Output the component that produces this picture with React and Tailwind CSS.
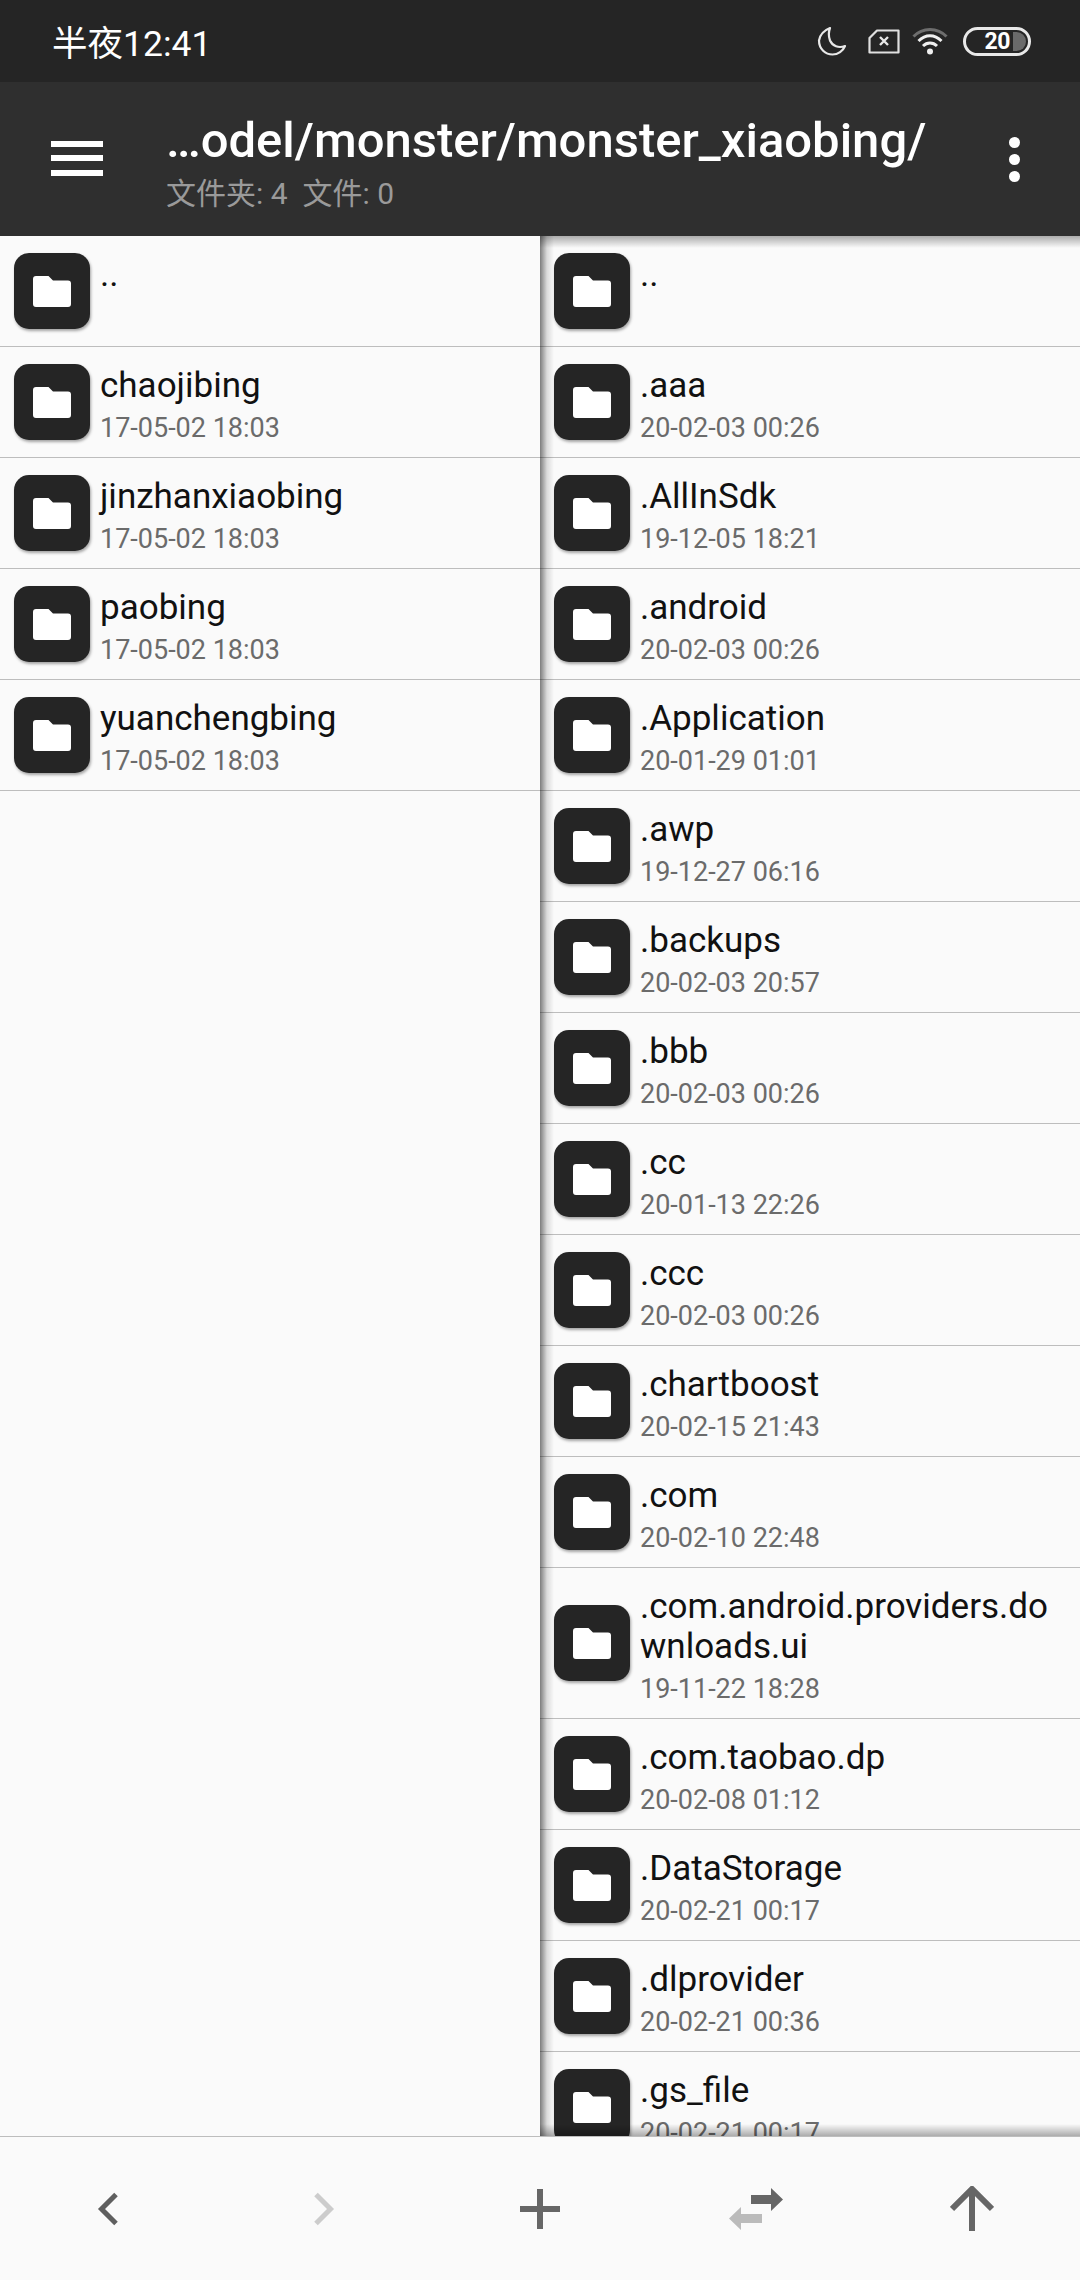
const leftRows = [
    { name: '..', date: '' },
    { name: 'chaojibing', date: '17-05-02 18:03' },
    { name: 'jinzhanxiaobing', date: '17-05-02 18:03' },
    { name: 'paobing', date: '17-05-02 18:03' },
    { name: 'yuanchengbing', date: '17-05-02 18:03' },
];

const rightRows = [
    { name: '..', date: '' },
    { name: '.aaa', date: '20-02-03 00:26' },
    { name: '.AllInSdk', date: '19-12-05 18:21' },
    { name: '.android', date: '20-02-03 00:26' },
    { name: '.Application', date: '20-01-29 01:01' },
    { name: '.awp', date: '19-12-27 06:16' },
    { name: '.backups', date: '20-02-03 20:57' },
    { name: '.bbb', date: '20-02-03 00:26' },
    { name: '.cc', date: '20-01-13 22:26' },
    { name: '.ccc', date: '20-02-03 00:26' },
    { name: '.chartboost', date: '20-02-15 21:43' },
    { name: '.com', date: '20-02-10 22:48' },
    { name: '.com.android.providers.downloads.ui', date: '19-11-22 18:28' },
    { name: '.com.taobao.dp', date: '20-02-08 01:12' },
    { name: '.DataStorage', date: '20-02-21 00:17' },
    { name: '.dlprovider', date: '20-02-21 00:36' },
    { name: '.gs_file', date: '20-02-21 00:17' },
];

function FolderIcon() {
    return (
        <div className="w-[76px] h-[76px] shrink-0 rounded-[15px] bg-[#252525] flex items-center justify-center shadow-[1px_2px_3px_rgba(0,0,0,0.35)]">
            <svg width="38" height="31" viewBox="0 0 38 31">
                <path d="M3 0H15.5L20 4.5H35A3 3 0 0 1 38 7.500V28A3 3 0 0 1 35 31H3A3 3 0 0 1 0 28V3A3 3 0 0 1 3 0Z" fill="#fff" />
            </svg>
        </div>
    );
}

function Row({ name, date }) {
    return (
        <div className="flex items-center gap-[10px] pl-[14px] pr-[20px] py-[17px] border-b border-[#bdbdbd]">
            <FolderIcon />
            <div className="flex-1 min-w-0">
                <div className="pt-[2px] text-[35px] leading-[40px] text-[#111] break-all">{name}</div>
                <div className="text-[27px] leading-[44px] h-[34px] text-[#6b6b6b]">{date}</div>
            </div>
        </div>
    );
}

function StatusIcons() {
    return (
        <div className="flex items-center">
            <svg width="30" height="30" viewBox="0 0 30 30" fill="none" className="mr-[21px]">
                <path d="M13 2C8 4 3 8.500 2 14.500C2 23 8.500 28.500 15.500 28.500C21 28.500 26 25 28 20C21.500 22.500 15.500 20 13 14.500C11.500 10.500 11.500 6 13 2Z" stroke="#e8e8e8" strokeWidth="2.200" strokeLinejoin="round" />
            </svg>
            <svg width="32" height="25" viewBox="0 0 32 25" fill="none" className="mr-[12px]">
                <path d="M9 1.500H30.500V23.500H1.500V9Z" stroke="#e0e0e0" strokeWidth="2.200" strokeLinejoin="round" />
                <path d="M12 8L20 16M20 8L12 16" stroke="#e8e8e8" strokeWidth="2.400" />
            </svg>
            <svg width="36" height="28" viewBox="0 0 36 28" fill="none" className="mr-[15px]">
                <path d="M1.500 9.500C10.500 0 25.500 0 34.500 9.500" stroke="#6e6e6e" strokeWidth="3" />
                <path d="M6.500 14C13.500 7 22.500 7 29.500 14" stroke="#f0f0f0" strokeWidth="3" />
                <path d="M11 19C15 15 21 15 25 19" stroke="#f0f0f0" strokeWidth="3" />
                <circle cx="18" cy="24.500" r="3" fill="#f0f0f0" />
            </svg>
            <div className="relative w-[68px] h-[29px] rounded-full border-[3px] border-[#e8e8e8] flex items-center justify-end pr-[18px]">
                <span className="text-[23px] leading-none font-bold text-white tracking-[-0.5px]">20</span>
                <div className="absolute right-[2px] top-[2px] w-[13px] h-[19px] rounded-r-full bg-[#6a6a6a]" />
            </div>
        </div>
    );
}

export default function App() {
    return (
        <div
            className="w-[1080px] h-[2280px] flex flex-col overflow-hidden bg-[#fafafa]"
            style={{ fontFamily: 'Roboto, "Noto Sans CJK SC", sans-serif' }}
        >
            {/* Status bar */}
            <div className="h-[82px] shrink-0 bg-[#252525] flex items-center justify-between pl-[52px] pr-[49px]">
                <span className="text-[35.500px] text-white leading-none mt-[8px]">半夜12:41</span>
                <StatusIcons />
            </div>

            {/* Toolbar */}
            <div className="h-[154px] shrink-0 bg-[#2f2f2f] flex items-center pl-[51px] pr-[60px]">
                <div className="w-[52px] h-[35px] -mt-[2px] flex flex-col justify-between shrink-0">
                    <div className="h-[6px] bg-white" />
                    <div className="h-[6px] bg-white" />
                    <div className="h-[6px] bg-white" />
                </div>
                <div className="flex-1 self-start ml-[63px] pt-[31px]">
                    <div className="text-[49px] leading-[56px] font-medium text-white whitespace-nowrap">…odel/monster/monster_xiaobing/</div>
                    <div className="text-[30px] leading-[36px] mt-[7px] text-[#9a9a9a] whitespace-pre">文件夹: 4  文件: 0</div>
                </div>
                <div className="flex flex-col gap-[6px] shrink-0">
                    <div className="w-[11px] h-[11px] rounded-full bg-white" />
                    <div className="w-[11px] h-[11px] rounded-full bg-white" />
                    <div className="w-[11px] h-[11px] rounded-full bg-white" />
                </div>
            </div>

            {/* Panes */}
            <div className="flex-1 min-h-0 flex">
                <div className="w-[540px] overflow-hidden">
                    {leftRows.map((r) => <Row key={r.name} {...r} />)}
                </div>
                <div className="relative w-[540px] overflow-hidden">
                    {rightRows.map((r) => <Row key={r.name} {...r} />)}
                    <div className="absolute left-0 top-0 bottom-0 w-[14px] bg-linear-to-r from-[#00000080] via-[#00000020] to-transparent" />
                    <div className="absolute left-0 right-0 top-0 h-[12px] bg-linear-to-b from-[#00000050] to-transparent" />
                    <div className="absolute left-0 right-0 bottom-0 h-[12px] bg-linear-to-t from-[#00000050] to-transparent" />
                </div>
            </div>

            {/* Bottom bar */}
            <div className="h-[144px] shrink-0 border-t border-[#bdbdbd] bg-[#fafafa] grid grid-cols-5 place-items-center">
                <svg width="22" height="34" viewBox="0 0 22 34" fill="none">
                    <path d="M19 2.500L4.500 17L19 31.500" stroke="#5f5f5f" strokeWidth="5" />
                </svg>
                <svg width="22" height="34" viewBox="0 0 22 34" fill="none">
                    <path d="M3 2.500L17.500 17L3 31.500" stroke="#cccccc" strokeWidth="5" />
                </svg>
                <svg width="40" height="40" viewBox="0 0 40 40" fill="none">
                    <path d="M20 0V40M0 20H40" stroke="#666" strokeWidth="6" />
                </svg>
                <svg width="54" height="42" viewBox="0 0 54 42">
                    <path d="M22 7H42V0L54 11.500L42 23V16H22Z" fill="#666" />
                    <path d="M33 26H12V19L0 30.500L12 42V35H33Z" fill="#bbb" />
                </svg>
                <svg width="44" height="45" viewBox="0 0 44 45" fill="none">
                    <path d="M22 45V3M2 23L22 3L42 23" stroke="#666" strokeWidth="6" />
                </svg>
            </div>
        </div>
    );
}
